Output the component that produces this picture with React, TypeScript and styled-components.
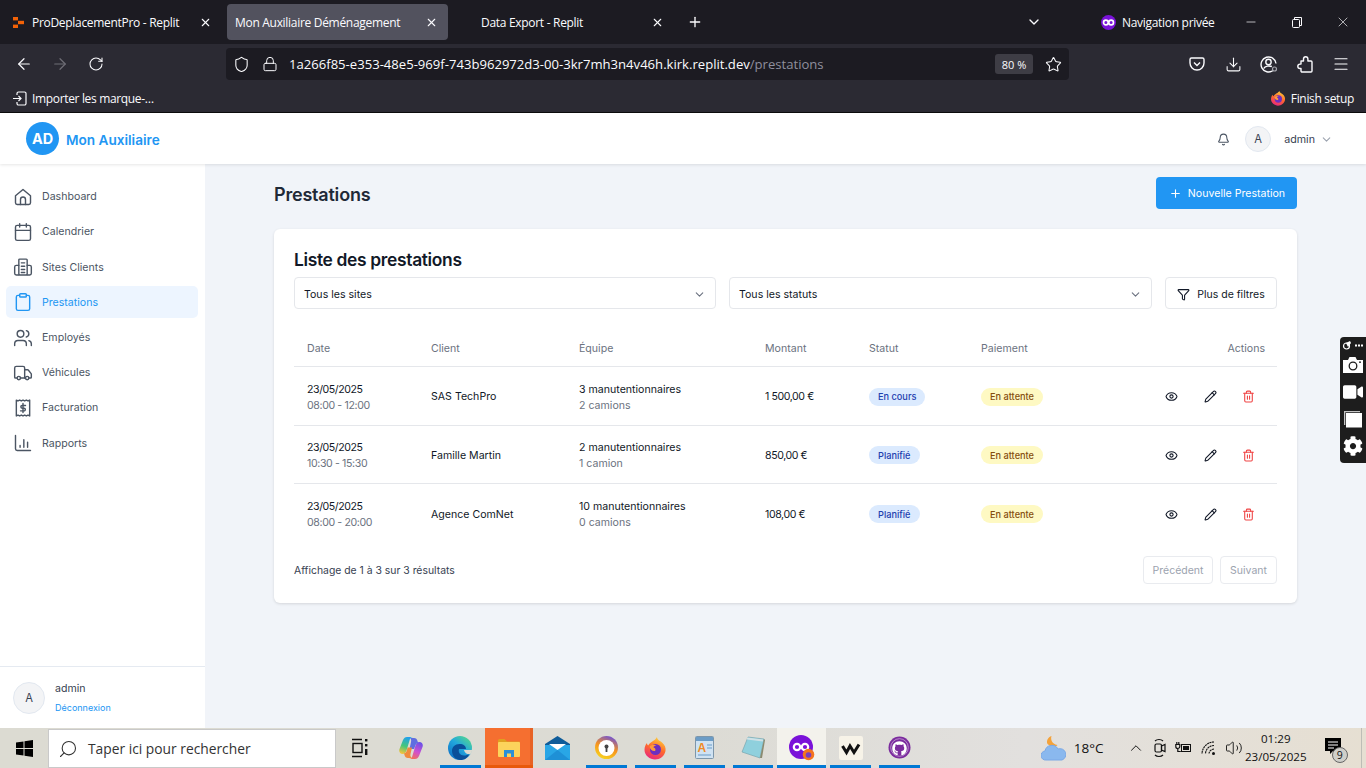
import React from "react";
import styled, { createGlobalStyle } from "styled-components";
import {
  ArrowLeft, ArrowRight, RotateCw, Shield, Lock, Star, Download, Menu, X, Plus, ChevronDown, ChevronUp, Minus,
  Bell, Eye, Pencil, Trash2, Funnel, Search, Volume2, Users, Calendar, Clipboard,
} from "lucide-react";
import { FaGithub, FaCog, FaVideo } from "react-icons/fa";

const Global = createGlobalStyle`
  html, body { margin: 0; padding: 0; height: 100%; overflow: hidden; background: #f1f4f9; }
  body { font-family: Inter, "Liberation Sans", sans-serif; }
  * { box-sizing: border-box; }
`;

const Shell = styled.div`position: relative; width: 1366px; height: 768px; display: flex; flex-direction: column; overflow: hidden;`;

/* Browser chrome */
const TabBar = styled.div`height: 44px; flex: none; background: #1c1b22; display: flex; align-items: center; padding-left: 1px; color: #fbfbfe; font: 12px "Open Sans", sans-serif; letter-spacing: -.3px;`;
const Tab = styled.div<{ $active?: boolean; $pad: number }>`
  width: 221px; flex: none; height: 36px; margin-right: 5px; border-radius: 4px; display: flex; align-items: center; gap: 8px;
  padding: 0 10px 0 ${(p) => p.$pad}px; background: ${(p) => (p.$active ? "#52525e" : "transparent")}; white-space: nowrap;
  svg.close { margin-left: auto; }
`;
const NewTab = styled.div`margin-left: 8px; flex: none; display: flex; width: 16px;`;
const TabChevron = styled.div`margin-left: 323px; flex: none; display: flex; width: 16px;`;
const Private = styled.div`margin-left: 59px; flex: none; display: flex; align-items: center; gap: 6px; width: 115px; white-space: nowrap;`;
const WinBtn = styled.div<{ $ml?: number }>`width: 46px; flex: none; height: 44px; display: flex; align-items: center; justify-content: center; margin-left: ${(p) => p.$ml ?? 0}px;`;

const NavBar = styled.div`height: 40px; flex: none; background: #2b2a33; display: flex; align-items: center; padding-left: 6px; color: #fbfbfe;`;
const NavBtn = styled.div<{ $dim?: boolean }>`width: 36px; height: 32px; flex: none; display: flex; align-items: center; justify-content: center; color: ${(p) => (p.$dim ? "#6f6e76" : "#fbfbfe")};`;
const UrlBar = styled.div`width: 843px; flex: none; margin-left: 112px; height: 32px; border-radius: 4px; background: #1c1b22; display: flex; align-items: center; gap: 12px; padding: 0 7px 0 7px; font: 13.1px "Open Sans", sans-serif; white-space: nowrap;`;
const UrlText = styled.span`margin-left: -1px;`;
const UrlPath = styled.span`color: #8f8f9d;`;
const ZoomPill = styled.div`margin-left: auto; width: 38px; height: 20px; border-radius: 3px; background: #3e3d45; display: flex; align-items: center; justify-content: center; font-size: 11px;`;
const ToolIcons = styled.div`margin-left: 110px; display: flex;`;

const BookmarkBar = styled.div`height: 29px; flex: none; background: #2b2a33; border-bottom: 1px solid #0c0c0d; display: flex; align-items: center; justify-content: space-between; padding: 0 12px; color: #fbfbfe; font: 12px "Open Sans", sans-serif; letter-spacing: -.34px;`;
const BookmarkItem = styled.div`display: flex; align-items: center; gap: 5px; white-space: nowrap;`;

/* App header */
const AppHeader = styled.header`height: 51px; flex: none; background: #fff; display: flex; align-items: center; padding: 1px 33px 0 26px; box-shadow: 0 1px 3px rgba(0,0,0,.1); position: relative; z-index: 2;`;
const LogoMark = styled.div`width: 33px; height: 33px; margin-top: -1px; border-radius: 50%; background: #2196f3; color: #fff; font-weight: 700; font-size: 14.4px; display: flex; align-items: center; justify-content: center;`;
const Brand = styled.div`margin: 2px 0 0 7px; color: #2196f3; font-weight: 600; font-size: 13.6px;`;
const HeaderRight = styled.div`margin-left: auto; display: flex; align-items: center; color: #4b5563;`;
const Avatar = styled.div<{ $size: number }>`width: ${(p) => p.$size}px; height: ${(p) => p.$size}px; border-radius: 50%; background: #f3f4f6; border: 1px solid #e2e8f0; color: #374151; font-size: 11.2px; display: flex; align-items: center; justify-content: center; flex: none;`;
const HeaderName = styled.span`margin: 0 5px 0 13px; font-size: 10.7px; color: #374151;`;

/* Body */
const Body = styled.div`flex: 1; display: flex; min-height: 0;`;
const Sidebar = styled.aside`width: 205px; flex: none; background: #fff; display: flex; flex-direction: column;`;
const Nav = styled.nav`flex: 1; padding: 16.8px 7px 0 6px; display: flex; flex-direction: column; gap: 3.2px;`;
const NavItem = styled.a<{ $active?: boolean }>`
  height: 32px; border-radius: 5px; display: flex; align-items: center; gap: 9px; padding-left: 7px; font-size: 10.6px;
  background: ${(p) => (p.$active ? "#edf5ff" : "transparent")}; color: ${(p) => (p.$active ? "#2196f3" : "#4b5563")};
`;
const SideFooter = styled.div`height: 62px; border-top: 1px solid #e5eaf1; display: flex; align-items: center; gap: 10px; padding: 0 13px;`;
const SideUser = styled.div`display: flex; flex-direction: column; gap: 7px; color: #374151; font-size: 10.6px;`;
const Logout = styled.span`color: #2196f3; font-size: 9px;`;

const Main = styled.main`flex: 1; background: #f1f4f9; padding: 13px 69px 0;`;
const PageHead = styled.div`display: flex; justify-content: space-between; align-items: center; height: 32px; margin-bottom: 20px;`;
const PageTitle = styled.h1`margin: 2px 0 0; font-size: 18px; letter-spacing: -.2px; font-weight: 600; color: #1f2937;`;
const PrimaryBtn = styled.button`width: 141px; height: 32px; border: 0; border-radius: 4px; background: #2196f3; color: #fff; font: 10.6px Inter, sans-serif; display: flex; align-items: center; justify-content: center; gap: 6px; padding: 0 0 0 1px;`;

const Card = styled.section`height: 374px; background: #fff; border-radius: 6px; box-shadow: 0 1px 3px rgba(0,0,0,.12); padding: 20px 20px 19px;`;
const CardTitle = styled.h2`margin: 0 0 6px; font-size: 17.4px; letter-spacing: -.33px; line-height: 22px; font-weight: 600; color: #111827;`;
const Filters = styled.div`display: grid; grid-template-columns: 422px 423px 112px; column-gap: 13px; height: 32px;`;
const SelectBox = styled.div`border: 1px solid #e5e7eb; border-radius: 4px; display: flex; align-items: center; justify-content: space-between; padding: 2px 9px 0 9px; font-size: 10.6px; color: #111827;`;
const FilterBtn = styled.button`border: 1px solid #e5e7eb; border-radius: 4px; background: #fff; display: flex; align-items: center; justify-content: center; gap: 7px; font: 10.5px Inter, sans-serif; color: #111827; padding: 2px 0 0;`;

const Table = styled.div`margin-top: 21px;`;
const Row = styled.div<{ $head?: boolean; $last?: boolean }>`
  display: grid; grid-template-columns: 124px 148px 186px 104px 112px 1fr; align-items: center; padding: ${(p) => (p.$head ? 0 : 2)}px 12px 0 13px;
  height: ${(p) => (p.$head ? 37 : p.$last ? 58 : 58.5)}px; border-bottom: ${(p) => (p.$last ? "0" : "1px solid #e5e7eb")};
  font-size: 10.6px; color: ${(p) => (p.$head ? "#6b7280" : "#111827")};
`;
const SplitCell = styled.div`display: flex; align-items: center; justify-content: space-between;`;
const Stack = styled.div`display: flex; flex-direction: column; gap: 4px; line-height: 12px; margin-top: 2px;`;
const Sub = styled.span`color: #6b7280;`;
const Numeric = styled.span`letter-spacing: -.42px;`;
const SubNumeric = styled(Sub)`letter-spacing: -.38px;`;
const Badge = styled.span<{ $tone: "blue" | "yellow" }>`
  display: inline-flex; align-items: center; height: 18px; padding: 0 9px; border-radius: 9px; font-size: 9.2px; font-weight: 500;
  background: ${(p) => (p.$tone === "blue" ? "#dbeafe" : "#fef9c3")}; color: ${(p) => (p.$tone === "blue" ? "#1e40af" : "#854d0e")};
`;
const Actions = styled.div`display: flex; justify-content: flex-end; gap: 25.5px; padding-right: 10px; color: #111827;`;
const TrashWrap = styled.span`display: flex; color: #ef4444;`;
const Pager = styled.div`margin-top: 14px; height: 28px; display: flex; align-items: center; font-size: 10.4px; color: #374151;`;
const PagerBtn = styled.button<{ $w: number; $ml?: string }>`width: ${(p) => p.$w}px; height: 28px; margin-left: ${(p) => p.$ml ?? "7px"}; border: 1px solid #e9ebef; border-radius: 4px; background: #fff; color: #9ca3af; font: 10.5px Inter, sans-serif; padding: 0;`;

/* Floating capture toolbar */
const Floating = styled.div`position: absolute; right: 0; top: 337px; width: 26px; height: 126px; background: #1d1d1d; border-radius: 4px 0 0 4px; display: flex; flex-direction: column; align-items: center; padding: 3px 0 0; color: #fff;`;
const FloatTop = styled.div`height: 12px; margin-bottom: 3px; display: flex;`;
const FloatGap = styled.div<{ $mb: number }>`height: 20px; display: flex; align-items: center; margin-bottom: ${(p) => p.$mb}px;`;

/* Windows taskbar */
const Taskbar = styled.div`height: 40px; flex: none; background: linear-gradient(90deg, #dcdbd2 0%, #dcdbd4 50%, #e2e0de 75%, #e6dfd2 100%); display: flex; align-items: stretch; color: #111;`;
const StartBtn = styled.div`width: 48px; flex: none; display: flex; align-items: center; justify-content: center;`;
const SearchBox = styled.div`width: 288px; flex: none; margin-top: 1px; background: #fff; border: 1px solid #c9c9c9; display: flex; align-items: center; gap: 10px; padding-left: 9px; font: 13.8px "Open Sans", sans-serif; color: #333;`;
const TaskView = styled.div`width: 51px; flex: none; padding-right: 4px; display: flex; align-items: center; justify-content: center;`;
const Slot = styled.div<{ $open?: boolean; $bg?: string; $line?: string; $edge?: boolean }>`
  width: 48.8px; flex: none; display: flex; align-items: center; justify-content: center; padding-bottom: 1px; position: relative; background: ${(p) => p.$bg ?? "transparent"};
  box-shadow: ${(p) => (p.$edge ? "inset -3px 0 0 rgba(200,70,10,.3)" : "none")};
  &::after { content: ""; display: ${(p) => (p.$open ? "block" : "none")}; position: absolute; left: ${(p) => (p.$bg ? 0 : 4)}px; right: ${(p) => (p.$bg ? 0 : 4)}px; bottom: 0; height: 3px; background: ${(p) => p.$line ?? "#0078d4"}; }
`;
const Weather = styled.div`margin-left: 117px; width: 66px; flex: none; display: flex; align-items: center; gap: 8px; font: 13.5px "Open Sans", sans-serif; white-space: nowrap;`;
const Tray = styled.div`margin-left: 20px; flex: none; display: flex; align-items: center; gap: 9px;`;
const Clock = styled.div`margin-left: 2px; width: 62px; flex: none; display: flex; flex-direction: column; align-items: center; justify-content: center; gap: 4px; font: 11.6px/14px "Open Sans", sans-serif; white-space: nowrap;`;
const Notif = styled.div`margin-left: 18px; width: 27px; flex: none; position: relative; display: flex; align-items: center; padding-bottom: 5px;`;
const NotifBadge = styled.span`position: absolute; left: 7px; top: 19px; width: 16px; height: 16px; border-radius: 50%; border: 1px solid #666; background: #cfcfca; font: 10.5px/14px "Open Sans", sans-serif; text-align: center;`;
const DesktopEdge = styled.div`margin-left: auto; width: 5px; border-left: 1px solid #bdbdb6;`;

const S = ({ children, size = 20, vb = 24, sw = 1.7 }: { children: React.ReactNode; size?: number; vb?: number; sw?: number }) => (
  <svg width={size} height={size} viewBox={`0 0 ${vb} ${vb}`} fill="none" stroke="currentColor" strokeWidth={sw} strokeLinecap="round" strokeLinejoin="round" style={{ flex: "none" }}>{children}</svg>
);

const HomeI = () => <S><path d="M3 10.500 12 3l9 7.500V19a2 2 0 0 1-2 2H5a2 2 0 0 1-2-2Z" /><path d="M9 21v-6a3 3 0 0 1 6 0v6" /></S>;
const BuildingI = () => <S><rect x="7" y="2.500" width="10" height="19" rx="1" /><path d="M7 10H4a2 2 0 0 0-2 2v7.500a2 2 0 0 0 2 2h3M17 10h3a2 2 0 0 1 2 2v7.500a2 2 0 0 1-2 2h-3M10 7h4M10 11h4M10 15h4M10 18.500h4" /></S>;
const ReceiptI = () => <S><path d="M4 2.500l2 1 2-1 2 1 2-1 2 1 2-1 2 1 2-1v19l-2-1-2 1-2-1-2 1-2-1-2 1-2-1-2 1Z" /><path d="M12 6.500v11M15 9h-4a1.600 1.600 0 0 0 0 3.200h2.200a1.600 1.600 0 0 1 0 3.200H9" /></S>;
const ChartI = () => <S><path d="M3 3v16a2 2 0 0 0 2 2h16M8.500 17v-2M13 17V8M17.500 17v-6" /></S>;
const TruckI = () => <S><path d="M14 18V6a2 2 0 0 0-2-2H4a2 2 0 0 0-2 2v11a1 1 0 0 0 1 1h2" /><path d="M15 18H9" /><path d="M19 18h2a1 1 0 0 0 1-1v-3.650a1 1 0 0 0-.22-.624l-3.480-4.350A1 1 0 0 0 17.520 8H14" /><circle cx="17" cy="18" r="2" /><circle cx="7" cy="18" r="2" /></S>;

const Favicon = () => <svg width="11" height="11" viewBox="0 0 11 11" style={{ flex: "none" }}><rect x="0" y="0" width="5" height="3.400" fill="#f26207" /><rect x="0" y="7.600" width="5" height="3.400" fill="#f26207" /><rect x="5" y="3.800" width="6" height="3.400" fill="#f26207" /></svg>;
const Mask = () => <svg width="15" height="15" viewBox="0 0 16 16" style={{ flex: "none" }}><circle cx="8" cy="8" r="8" fill="#7a12d9" /><circle cx="5.200" cy="8" r="2.500" fill="none" stroke="#fff" strokeWidth="1.800" /><circle cx="10.800" cy="8" r="2.500" fill="none" stroke="#fff" strokeWidth="1.800" /></svg>;
const Firefox = ({ size = 16, id }: { size?: number; id: string }) => <svg width={size} height={size} viewBox="0 0 24 24" style={{ flex: "none" }}><defs><linearGradient id={id} x1=".7" y1="0" x2=".3" y2="1"><stop offset="0" stopColor="#ffd43a" /><stop offset=".5" stopColor="#ff6a2c" /><stop offset="1" stopColor="#e8247f" /></linearGradient></defs><path d="M14 1c0 3 3 3.500 5 5.500C22 9 23 12 22.500 15 21.500 20 17 23.500 12 23.500S1.500 19.500 1.500 14c0-3 1-5.500 2.500-7 0 1.200.5 2 1.200 2.500C6 7 9 6 10 5c1.500-1 3-2 4-4Z" fill={`url(#${id})`} /><circle cx="12.500" cy="13.500" r="5.500" fill="#6d2ec0" /><path d="M6.500 10.500c2-2 5-2 7-1-2 0-3 1-3 2 2 .5 2.500 2 1.500 3.500-2.500.5-5-1.500-5.500-4.500Z" fill="#ff9a3c" /></svg>;
const WinLogo = () => <svg width="17" height="17" viewBox="0 0 17 17" fill="#000"><path d="M0 2.500 7.500 1.400v6.600H0ZM8.500 1.200 17 0v8H8.500ZM0 9h7.500v6.600L0 14.500ZM8.500 9H17v8l-8.500-1.200Z" /></svg>;
const TaskViewI = () => <svg width="16" height="20" viewBox="0 0 16 20" fill="none" stroke="#111" strokeWidth="1.400"><path d="M0 1.500h10M0 18.500h10" /><rect x="1" y="5.500" width="9" height="9" /><rect x="13" y="1" width="2.400" height="2.400" fill="#111" stroke="none" /><rect x="13" y="6" width="2.400" height="2.400" fill="#111" stroke="none" /><rect x="13" y="11" width="2.400" height="6" fill="#111" stroke="none" /></svg>;
const CopilotI = () => <svg width="24" height="24" viewBox="0 0 24 24"><defs><linearGradient id="cpa" x1=".6" y1="0" x2=".3" y2="1"><stop offset="0" stopColor="#1f9ff0" /><stop offset=".55" stopColor="#45c77a" /><stop offset="1" stopColor="#f7c23b" /></linearGradient><linearGradient id="cpb" x1=".7" y1="0" x2=".3" y2="1"><stop offset="0" stopColor="#6a52e8" /><stop offset=".55" stopColor="#d04fd0" /><stop offset="1" stopColor="#f2705a" /></linearGradient></defs><path d="M8 1h6c-2 0-3 1-3.500 3.500L8 13c-.8 3-2 5-4.500 5S-.5 15.500.5 13L4 4C5 2 6 1 8 1Z" fill="url(#cpa)" /><path d="M16 23h-6c2 0 3-1 3.500-3.500L16 11c.8-3 2-5 4.500-5s4 2.500 3 5L20 20c-1 2-2 3-4 3Z" fill="url(#cpb)" /><path d="M11 2h4c2 0 3 1 3.500 3l.7 2c-1.500 0-2.700 1.500-3.200 3.500L15 13h-4.500L12 6c.5-2-.2-3.500-1-4Z" fill="#5f6ee0" /><path d="M13 22H9c-2 0-3-1-3.500-3l-.5-1.500c1.500-.3 2.500-1.500 3-3.500l.5-2.500h4.500L11.500 18c-.5 2 .5 3.500 1.500 4Z" fill="#f08a3c" /></svg>;
const EdgeI = () => <svg width="24" height="24" viewBox="0 0 24 24"><defs><linearGradient id="ed" x1=".9" y1="0" x2=".1" y2="1"><stop offset="0" stopColor="#58dc85" /><stop offset=".45" stopColor="#22a8dd" /><stop offset="1" stopColor="#0c6bc4" /></linearGradient></defs><circle cx="12" cy="12" r="12" fill="url(#ed)" /><path d="M4 15c0-4 3-7 7.500-7 4 0 6.500 2 6.500 5h-7c-1 3 1 6.500 5 6.500 2 0 4-.5 5.500-2C20 22 16 24 12.500 24 8 24 4 20 4 15Z" fill="#0a4f99" /><path d="M16 14h8c0 2-.5 3-1.500 4-2 1-6-.5-6.500-4Z" fill="#dcdbd2" /></svg>;
const FolderI = () => <svg width="22" height="18" viewBox="0 0 22 18"><path d="M0 1.500A1.500 1.500 0 0 1 1.500 0h5L9 2.500h12a1 1 0 0 1 1 1V6H0Z" fill="#e0a020" /><rect x="0" y="3" width="22" height="15" rx="1" fill="#fcd35c" /><path d="M6 18v-7h10v7h-3v-3.500H9V18Z" fill="#2b8fd8" /></svg>;
const MailI = () => <svg width="25" height="24" viewBox="0 0 25 24"><path d="M12.500 0 25 8v16H0V8Z" fill="#0f5c9a" /><path d="M0 9h25v15H0Z" fill="#29a6e6" /><path d="M0 24 12.500 14 25 24Z" fill="#1e90d6" /><path d="M4 8h17l-8.500 6Z" fill="#fff" /></svg>;
const VpnI = () => <svg width="23" height="23" viewBox="0 0 23 23"><defs><linearGradient id="vp" x1=".7" y1="0" x2=".3" y2="1"><stop offset="0" stopColor="#6d50d8" /><stop offset=".5" stopColor="#f7941e" /><stop offset="1" stopColor="#f7d51e" /></linearGradient></defs><circle cx="11.500" cy="11.500" r="11.500" fill="url(#vp)" /><circle cx="11.500" cy="12" r="8" fill="#fff" /><circle cx="11.500" cy="10.500" r="2" fill="#444" /><rect x="10.600" y="11" width="1.800" height="5" fill="#444" /></svg>;
const NotesI = () => <svg width="19" height="23" viewBox="0 0 19 23"><rect x=".5" y=".5" width="18" height="22" rx="1" fill="#cfe2f2" stroke="#7d96aa" /><rect x="1" y="1" width="17" height="4" fill="#6b9cc6" /><text x="2.500" y="16" fontFamily="Liberation Sans" fontSize="12" fontWeight="700" fill="#f08a24">A</text><path d="M12 9h5M12 12h5M3 19h13" stroke="#6a9bc8" strokeWidth="1.200" /></svg>;
const NotepadI = () => <svg width="24" height="23" viewBox="0 0 24 23"><path d="M7 1 23 3 19 22 1 16Z" fill="#8fd0dd" stroke="#6f9da8" strokeWidth=".6" /><path d="M19 22 23 3l1 1-3 18Z" fill="#8a8a70" /><path d="M6 2.500 22 4.500" stroke="#cfe1e6" strokeWidth="2" /></svg>;
const PrivateFF = () => <svg width="26" height="26" viewBox="0 0 26 26"><circle cx="12" cy="12" r="12" fill="#7a12d9" /><circle cx="8" cy="12" r="3.200" fill="none" stroke="#fff" strokeWidth="2.200" /><circle cx="16" cy="12" r="3.200" fill="none" stroke="#fff" strokeWidth="2.200" /><circle cx="19.500" cy="19.500" r="5.800" fill="#f5741e" /><circle cx="19.500" cy="20" r="2.800" fill="#7a3fc0" /></svg>;
const WaveI = () => <svg width="24" height="24" viewBox="0 0 24 24"><rect width="24" height="24" rx="2" fill="#f7f3e8" /><path d="M3.500 10 7.500 16.500 11 10 15 16.500 20 8.500" fill="none" stroke="#111" strokeWidth="3" /></svg>;
const GithubI = () => <svg width="23" height="23" viewBox="0 0 23 23"><circle cx="11.500" cy="11.500" r="11" fill="#7b2b9e" /><circle cx="11.500" cy="11.500" r="8.800" fill="none" stroke="#c7a5d6" strokeWidth=".8" /><foreignObject x="4" y="4" width="15" height="15"><FaGithub size={15} color="#fff" /></foreignObject></svg>;
const CloudI = () => <svg width="25" height="25" viewBox="0 0 25 25"><path d="M10.500 0c-1 3 0 8 6 9-2 2.500-7 2-10-1C5 5 7 1 10.500 0Z" fill="#f4a23a" /><path d="M5 24a4.500 4.500 0 0 1-1-9 7 7 0 0 1 13-2 5.500 5.500 0 0 1 4 11Z" fill="#8ab8ee" stroke="#7aa8e6" /></svg>;
const MeetI = () => <svg width="12" height="20" viewBox="0 0 12 20" fill="none" stroke="#111" strokeWidth="1.200" style={{ flex: "none" }}><path d="M1 3C3 1 7 1 9 3M1 17c2 2 6 2 8 0" /><rect x="1" y="6" width="6.500" height="8" rx="1.500" /><path d="M7.500 8 11 6.500v7L7.500 12Z" /></svg>;
const PowerI = () => <svg width="16" height="16" viewBox="0 0 16 16" fill="none" stroke="#111" style={{ flex: "none" }}><path d="M.8 4.500v2a2 2 0 0 0 4 0v-2ZM2.800 8.500v3h3M1.800 2v2.500M3.800 2v2.500" strokeWidth="1.200" /><rect x="6.500" y="4.500" width="9" height="7" /><rect x="8" y="6" width="6" height="4" fill="#111" stroke="none" /></svg>;
const WifiI = () => <svg width="16" height="16" viewBox="0 0 16 16" fill="none" stroke="#111" strokeWidth="1.100" style={{ flex: "none" }}><path d="M14 2A12 12 0 0 0 2 14M14 5.500A8.500 8.500 0 0 0 5.500 14M14 9A5 5 0 0 0 9 14" strokeDasharray="2 .6" /><circle cx="13.500" cy="13.500" r="1.500" fill="#111" stroke="none" /></svg>;
const NotifI = () => <svg width="16" height="16" viewBox="0 0 16 16" style={{ flex: "none" }}><path d="M0 0h16v13H8l-3 3v-3H0Z" fill="#000" /><path d="M3 4h10M3 7h10M3 10h6" stroke="#fff" /></svg>;
const FrontI = () => <svg width="20" height="18" viewBox="0 0 20 18"><path d="M1 1h16v1.300H2.300V15H1Z" fill="#c4c4c4" /><rect x="3" y="3" width="16" height="14.500" fill="#fff" /></svg>;
const CameraI = () => <svg width="20" height="16" viewBox="0 0 20 16"><path d="M0 3h5l1.500-3h6L14 3h6v13H0Z" fill="#fff" /><circle cx="10" cy="9" r="3.800" fill="#fff" stroke="#1d1d1d" strokeWidth="1.300" /><rect x="16" y="4.500" width="2" height="1.300" fill="#1d1d1d" /></svg>;
const FloatLink = () => <svg width="22" height="11" viewBox="0 0 22 11"><circle cx="4.500" cy="6" r="3" fill="none" stroke="#fff" strokeWidth="1.200" /><path d="M4 3 8 1l1 2-3 4" fill="#fff" /><rect x="13" y="4.500" width="2" height="2" fill="#fff" /><rect x="16" y="4.500" width="2" height="2" fill="#fff" /><rect x="19" y="4.500" width="2" height="2" fill="#fff" /></svg>;
const PocketI = () => <svg width="16" height="16" viewBox="0 0 16 16" fill="none" stroke="#fbfbfe" strokeWidth="1.400"><path d="M2.500 2h11A1.500 1.500 0 0 1 15 3.500V7a7 7 0 0 1-14 0V3.500A1.500 1.500 0 0 1 2.500 2Z" /><path d="m5 6.500 3 3 3-3" /></svg>;
const ProfileI = () => <svg width="18" height="18" viewBox="0 0 18 18" fill="none" stroke="#fbfbfe" strokeWidth="1.400"><path d="M13 15.500A7.500 7.500 0 1 1 16 8.500" /><circle cx="8.500" cy="7" r="2.700" /><path d="M3.800 13.500c1-2.800 6-3 8-1.800" /><circle cx="14.500" cy="14" r="2" stroke="#a5a5ad" strokeWidth="1.200" /></svg>;
const ExtensionI = () => <svg width="16" height="17" viewBox="0 0 16 17" fill="none" stroke="#fbfbfe" strokeWidth="1.400" strokeLinejoin="round"><path d="M6.500 5V3a2.200 2.200 0 0 1 4.400 0v2H14a1 1 0 0 1 1 1v9a1 1 0 0 1-1 1H5a1 1 0 0 1-1-1v-2.500H3a2.200 2.200 0 0 1 0-4.400h1V5Z" /></svg>;
const ImportI = () => <svg width="15" height="15" viewBox="0 0 15 15" fill="none" stroke="#fbfbfe" strokeWidth="1.200" style={{ flex: "none" }}><path d="M5 4V2.500A1.500 1.500 0 0 1 6.500 1h6A1.500 1.500 0 0 1 14 2.500v10a1.500 1.500 0 0 1-1.500 1.500h-6A1.500 1.500 0 0 1 5 12.500V11M1 7.500h8M6.500 5 9 7.500 6.500 10" /></svg>;

const rows = [
  { d: "08:00 - 12:00", c: "SAS TechPro", t: "3 manutentionnaires", v: "2 camions", m: "1 500,00 €", s: "En cours" },
  { d: "10:30 - 15:30", c: "Famille Martin", t: "2 manutentionnaires", v: "1 camion", m: "850,00 €", s: "Planifié" },
  { d: "08:00 - 20:00", c: "Agence ComNet", t: "10 manutentionnaires", v: "0 camions", m: "108,00 €", s: "Planifié" },
];
const navItems: [string, React.ReactNode][] = [
  ["Dashboard", <HomeI />], ["Calendrier", <Calendar size={20} strokeWidth={1.7} />], ["Sites Clients", <BuildingI />], ["Prestations", <Clipboard size={20} strokeWidth={1.7} />],
  ["Employés", <Users size={20} strokeWidth={1.7} />], ["Véhicules", <TruckI />], ["Facturation", <ReceiptI />], ["Rapports", <ChartI />],
];

export default function App() {
  return (
    <Shell>
      <Global />
      <TabBar>
        <Tab $pad={12}><Favicon /><span>ProDeplacementPro - Replit</span><X className="close" size={13} /></Tab>
        <Tab $pad={8} $active><span>Mon Auxiliaire Déménagement</span><X className="close" size={13} /></Tab>
        <Tab $pad={28}><span>Data Export - Replit</span><X className="close" size={13} /></Tab>
        <NewTab><Plus size={16} /></NewTab>
        <TabChevron><ChevronDown size={16} /></TabChevron>
        <Private><Mask /><span>Navigation privée</span></Private>
        <WinBtn $ml={12}><Minus size={14} strokeWidth={1.2} /></WinBtn>
        <WinBtn><svg width="10" height="11" viewBox="0 0 10 11" fill="none" stroke="#fbfbfe"><rect x=".5" y="2.500" width="7" height="8" rx="1" /><path d="M2.500 2.500V.5h7v8H7.500" /></svg></WinBtn>
        <WinBtn><X size={16} strokeWidth={1} /></WinBtn>
      </TabBar>
      <NavBar>
        <NavBtn><ArrowLeft size={18} strokeWidth={1.6} /></NavBtn>
        <NavBtn $dim><ArrowRight size={18} strokeWidth={1.6} /></NavBtn>
        <NavBtn><RotateCw size={16} strokeWidth={1.6} /></NavBtn>
        <UrlBar>
          <Shield size={17} strokeWidth={1.5} />
          <Lock size={16} strokeWidth={1.5} />
          <UrlText>1a266f85-e353-48e5-969f-743b962972d3-00-3kr7mh3n4v46h.kirk.replit.dev<UrlPath>/prestations</UrlPath></UrlText>
          <ZoomPill>80 %</ZoomPill>
          <Star size={17} strokeWidth={1.5} />
        </UrlBar>
        <ToolIcons>
          <NavBtn><PocketI /></NavBtn>
          <NavBtn><Download size={17} strokeWidth={1.5} /></NavBtn>
          <NavBtn><ProfileI /></NavBtn>
          <NavBtn><ExtensionI /></NavBtn>
          <NavBtn><Menu size={18} strokeWidth={1.5} /></NavBtn>
        </ToolIcons>
      </NavBar>
      <BookmarkBar>
        <BookmarkItem><ImportI /><span>Importer les marque-…</span></BookmarkItem>
        <BookmarkItem><Firefox size={16} id="ffa" /><span>Finish setup</span></BookmarkItem>
      </BookmarkBar>

      <AppHeader>
        <LogoMark>AD</LogoMark>
        <Brand>Mon Auxiliaire</Brand>
        <HeaderRight>
          <Bell size={13} style={{ marginRight: 15 }} />
          <Avatar $size={26}>A</Avatar>
          <HeaderName>admin</HeaderName>
          <ChevronDown size={13} color="#9ca3af" />
        </HeaderRight>
      </AppHeader>

      <Body>
        <Sidebar>
          <Nav>
            {navItems.map(([label, icon]) => (
              <NavItem key={label} $active={label === "Prestations"}>{icon}<span>{label}</span></NavItem>
            ))}
          </Nav>
          <SideFooter>
            <Avatar $size={32}>A</Avatar>
            <SideUser><span>admin</span><Logout>Déconnexion</Logout></SideUser>
          </SideFooter>
        </Sidebar>
        <Main>
          <PageHead>
            <PageTitle>Prestations</PageTitle>
            <PrimaryBtn><Plus size={13} />Nouvelle Prestation</PrimaryBtn>
          </PageHead>
          <Card>
            <CardTitle>Liste des prestations</CardTitle>
            <Filters>
              <SelectBox>Tous les sites<ChevronDown size={13} color="#6b7280" /></SelectBox>
              <SelectBox>Tous les statuts<ChevronDown size={13} color="#6b7280" /></SelectBox>
              <FilterBtn><Funnel size={13} />Plus de filtres</FilterBtn>
            </Filters>
            <Table>
              <Row $head>
                <div>Date</div><div>Client</div><div>Équipe</div><div>Montant</div><div>Statut</div>
                <SplitCell><span>Paiement</span><span>Actions</span></SplitCell>
              </Row>
              {rows.map((r, i) => (
                <Row key={r.c} $last={i === rows.length - 1}>
                  <Stack><Numeric>23/05/2025</Numeric><SubNumeric>{r.d}</SubNumeric></Stack>
                  <div>{r.c}</div>
                  <Stack><span>{r.t}</span><Sub>{r.v}</Sub></Stack>
                  <Numeric>{r.m}</Numeric>
                  <div><Badge $tone="blue">{r.s}</Badge></div>
                  <SplitCell>
                    <Badge $tone="yellow">En attente</Badge>
                    <Actions><Eye size={13} /><Pencil size={13} /><TrashWrap><Trash2 size={13} /></TrashWrap></Actions>
                  </SplitCell>
                </Row>
              ))}
            </Table>
            <Pager>
              <span>Affichage de 1 à 3 sur 3 résultats</span>
              <PagerBtn $w={70} $ml="auto">Précédent</PagerBtn>
              <PagerBtn $w={57}>Suivant</PagerBtn>
            </Pager>
          </Card>
        </Main>
      </Body>

      <Taskbar>
        <StartBtn><WinLogo /></StartBtn>
        <SearchBox><Search size={20} strokeWidth={1.3} style={{ transform: "scaleX(-1)", flex: "none" }} /><span>Taper ici pour rechercher</span></SearchBox>
        <TaskView><TaskViewI /></TaskView>
        <Slot><CopilotI /></Slot>
        <Slot $open><EdgeI /></Slot>
        <Slot $open $edge $bg="#f56f30" $line="#e8590c"><FolderI /></Slot>
        <Slot><MailI /></Slot>
        <Slot $open><VpnI /></Slot>
        <Slot $open><Firefox size={24} id="ffb" /></Slot>
        <Slot $open><NotesI /></Slot>
        <Slot $open><NotepadI /></Slot>
        <Slot $open $bg="#f3f2ec"><PrivateFF /></Slot>
        <Slot $open><WaveI /></Slot>
        <Slot $open><GithubI /></Slot>
        <Weather><CloudI /><span>18°C</span></Weather>
        <Tray>
          <ChevronUp size={18} strokeWidth={1.3} />
          <MeetI />
          <PowerI />
          <WifiI />
          <Volume2 size={18} strokeWidth={1.2} />
        </Tray>
        <Clock><span>01:29</span><span>23/05/2025</span></Clock>
        <Notif><NotifI /><NotifBadge>9</NotifBadge></Notif>
        <DesktopEdge />
      </Taskbar>

      <Floating>
        <FloatTop><FloatLink /></FloatTop>
        <FloatGap $mb={7}><CameraI /></FloatGap>
        <FloatGap $mb={7}><FaVideo size={20} color="#fff" /></FloatGap>
        <FloatGap $mb={7}><FrontI /></FloatGap>
        <FloatGap $mb={0}><FaCog size={20} color="#fff" /></FloatGap>
      </Floating>
    </Shell>
  );
}
